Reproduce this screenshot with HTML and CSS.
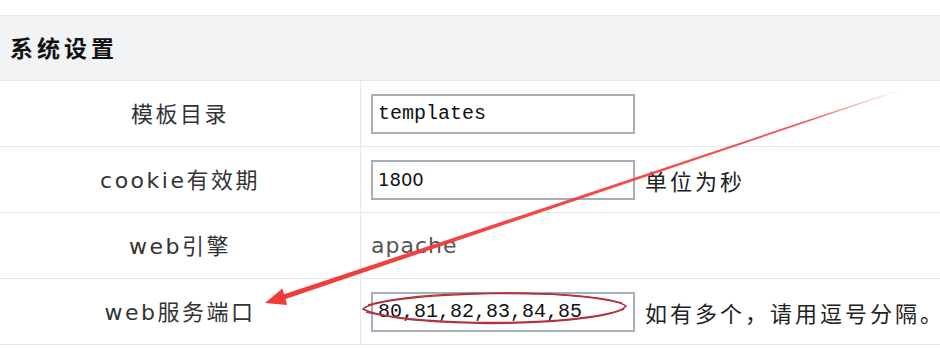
FILE: index.html
```html
<!DOCTYPE html>
<html lang="zh-CN">
<head>
    <meta charset="UTF-8">
    <title>系统设置</title>
    <link rel="stylesheet" href="styles.css">
</head>
<body>

    <!-- Settings panel -->
    <div class="panel">
        <div class="panel-title">系统设置</div>
        <table class="settings">
            <tr>
                <th>模板目录</th>
                <td><input class="field mono" type="text" value="templates"></td>
            </tr>
            <tr>
                <th>cookie有效期</th>
                <td><input class="field" type="text" value="1800"><span class="hint">单位为秒</span></td>
            </tr>
            <tr>
                <th>web引擎</th>
                <td><span class="plain">apache</span></td>
            </tr>
            <tr>
                <th>web服务端口</th>
                <td><input class="field mono" type="text" value="80,81,82,83,84,85"><span class="hint">如有多个，请用逗号分隔。</span></td>
            </tr>
        </table>

        <!-- Annotation drawn over the screenshot -->
        <svg class="markup" width="940" height="348" viewBox="0 0 940 348">
            <defs>
                <linearGradient id="fade" gradientUnits="userSpaceOnUse" x1="900" y1="90" x2="266" y2="303">
                    <stop offset="0" stop-color="#f03a3a" stop-opacity="0"/>
                    <stop offset="0.15" stop-color="#f03a3a" stop-opacity="0.85"/>
                    <stop offset="1" stop-color="#f03a3a"/>
                </linearGradient>
            </defs>
            <polygon fill="url(#fade)" points="900.2,90.5 899.8,89.5 284.0,294.2 282.4,288.5 265,303 287.0,305.0 285.6,298.9"/>
            <path class="ring" d="M363 309 C 380 292, 600 286, 626 306 C 612 326, 410 331, 363 309 Z"/>
            <path class="ring" d="M368 305 C 420 290, 560 289, 622 303 M366 312 C 430 327, 580 326, 624 309"/>
        </svg>
    </div>

</body>
</html>
```

FILE: styles.css
```css
body, html {
    margin: 0;
    padding: 0;
    background: #fff;
    overflow: hidden;
}

.panel {
    position: relative;
    padding-top: 15px;
    width: 960px;
}

.panel-title {
    height: 64px;
    line-height: 62px;
    padding-left: 10px;
    background: #f2f3f5;
    border-top: 1px solid #e4e7eb;
    border-bottom: 1px solid #e4e7eb;
    font-family: "Noto Sans CJK SC", sans-serif;
    font-size: 23px;
    font-weight: bold;
    letter-spacing: 4px;
    color: #111;
}

.settings {
    width: 100%;
    border-collapse: collapse;
}

.settings th,
.settings td {
    height: 65px;
    padding: 0;
    border-bottom: 1px solid #e4e7eb;
    white-space: nowrap;
}

.settings th {
    width: 360px;
    height: 62px;
    padding-bottom: 3px;
    border-right: 1px solid #e4e7eb;
    font-family: "DejaVu Sans", "Noto Sans CJK SC", sans-serif;
    font-size: 22px;
    font-weight: normal;
    letter-spacing: 2.5px;
    color: #333;
    text-align: center;
}

.settings td {
    padding-left: 10px;
    text-align: left;
}

.field {
    box-sizing: border-box;
    width: 264px;
    height: 40px;
    padding: 0 5px;
    border: 2px solid #a6aeb9;
    background: #fff;
    font-family: "DejaVu Sans", sans-serif;
    font-size: 18px;
    color: #111;
    vertical-align: middle;
}

.field.mono {
    font-family: "Liberation Mono", monospace;
    font-size: 20px;
}

.hint {
    margin-left: 10px;
    font-family: "Noto Sans CJK SC", sans-serif;
    font-size: 22px;
    letter-spacing: 3px;
    color: #222;
    vertical-align: middle;
}

.plain {
    font-family: "DejaVu Sans", sans-serif;
    font-size: 22px;
    letter-spacing: 1px;
    color: #555;
}

.markup {
    position: absolute;
    top: 0;
    left: 0;
    pointer-events: none;
}

.ring {
    fill: none;
    stroke: #b3303d;
    stroke-width: 1.5;
}
```
